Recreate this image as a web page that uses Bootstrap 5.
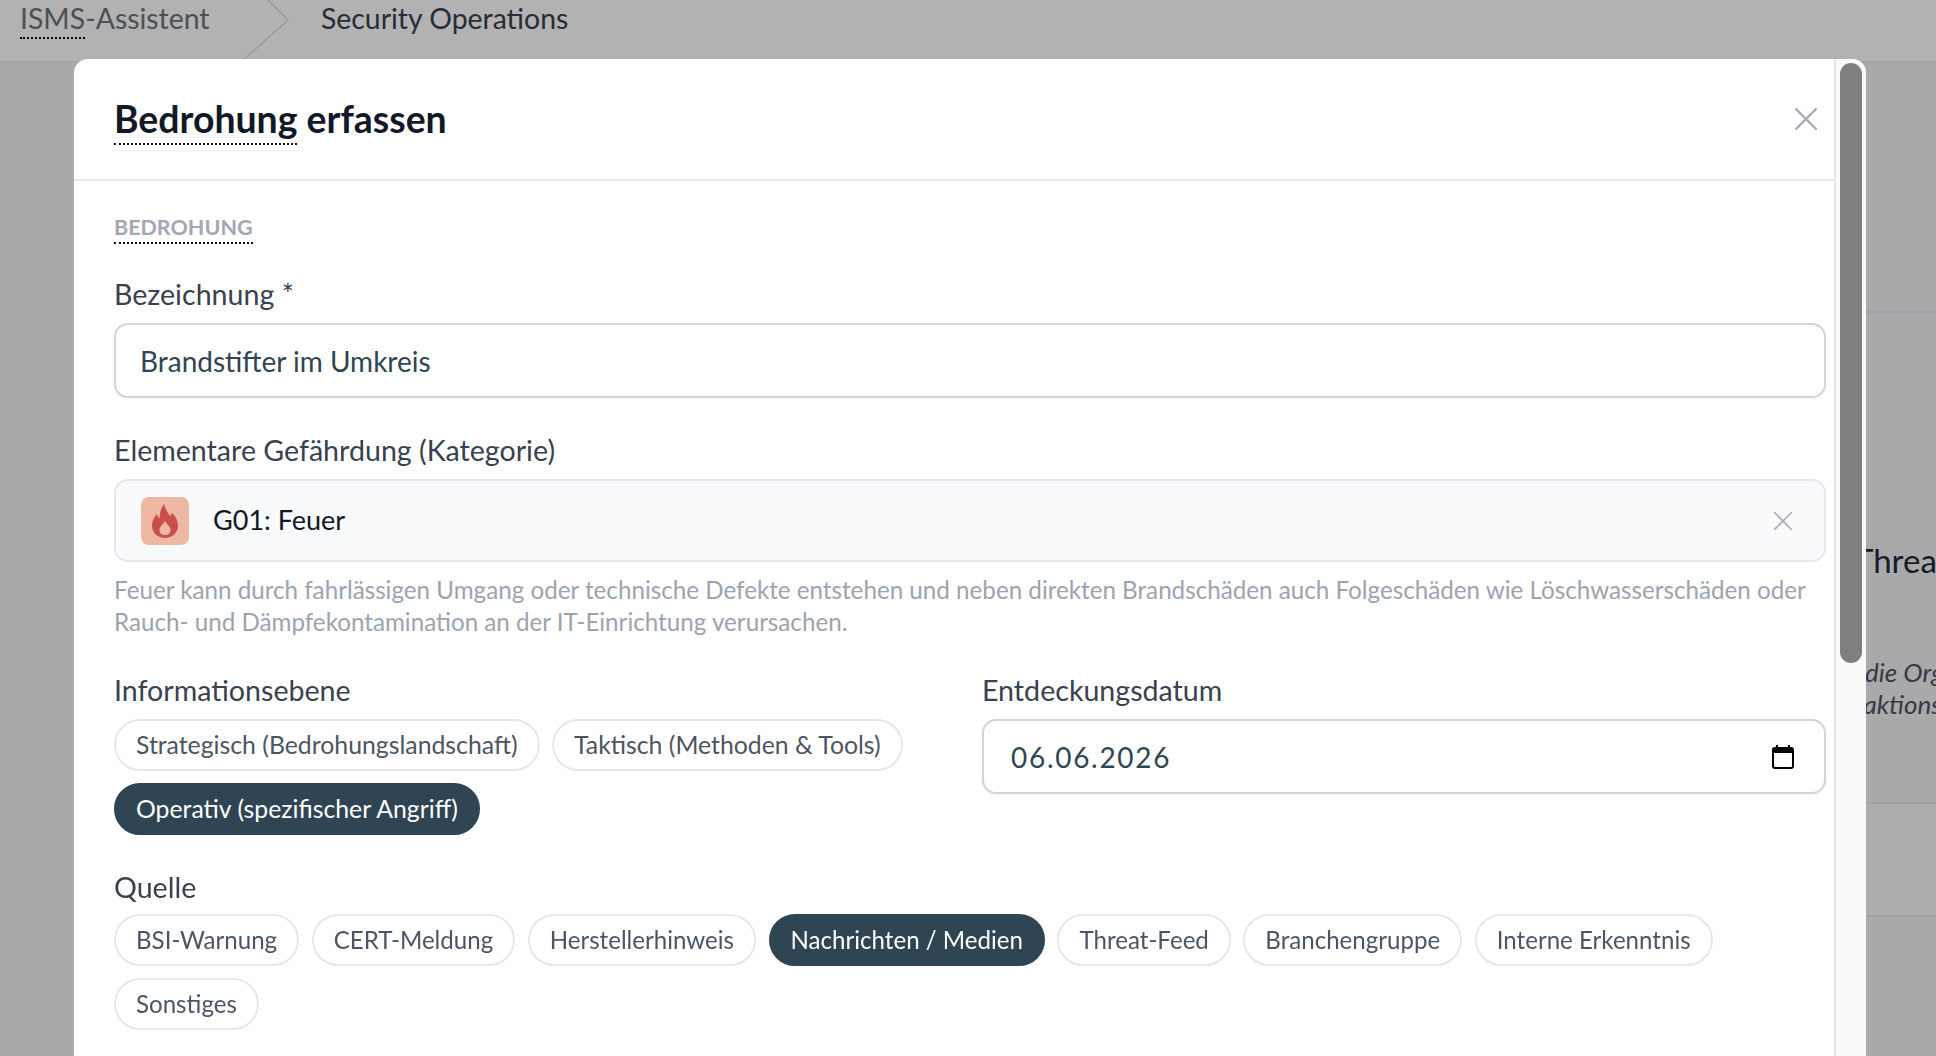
<!DOCTYPE html>
<html lang="de">
  <head>
    <meta charset="UTF-8" />
    <meta name="viewport" content="width=device-width, initial-scale=1.0" />
    <title>Bedrohung erfassen | ISMS-Assistent</title>
    <link
      href="https://cdn.jsdelivr.net/npm/bootstrap@5.3.3/dist/css/bootstrap.min.css"
      rel="stylesheet"
    />
    <style>
      html,
      body {
        height: 100%;
        overflow: hidden;
      }

      body {
        font-family: "Lato", "Liberation Sans", sans-serif;
        background: #f2f2f5;
        color: #374151;
      }

      /* page behind the dialog */
      .top-strip {
        height: 63px;
        background: #fff;
        border-bottom: 2px solid #e5e7eb;
        font-size: 28.4px;
      }

      .crumb-root {
        padding-left: 20px;
        width: 321px;
        color: #6b7280;
        line-height: 36px;
      }

      .crumb-current {
        color: #374151;
        line-height: 36px;
      }

      .crumb-arrow {
        position: absolute;
        left: 240px;
        top: 0;
      }

      .back-rows {
        padding-left: 1500px;
      }

      .back-row {
        border-bottom: 2px solid #e5e7eb;
        white-space: nowrap;
        overflow: hidden;
      }

      .back-row-a {
        height: 250px;
      }

      .back-row-b {
        height: 491px;
        background: #f2f2f5;
        padding: 225px 0 0 354px;
      }

      .back-row-c {
        height: 113px;
        background: #f8f8f8;
      }

      .back-row-d {
        height: 140px;
        background: #f2f2f5;
        border: 0;
      }

      .back-heading {
        font-size: 33px;
        line-height: 44px;
        color: #1f2937;
      }

      .back-quote {
        font-size: 26px;
        line-height: 32px;
        font-style: italic;
        color: #4b5563;
        margin: 74px 0 0 11px;
      }

      .quote-tail {
        margin-left: -14px;
      }

      /* dialog */
      .scrim {
        position: fixed;
        inset: 0;
        background: rgba(0, 0, 0, 0.3);
      }

      .sheet {
        position: fixed;
        top: 59px;
        left: 74px;
        width: 1792px;
        bottom: 0;
        border: 0;
        border-radius: 14px 14px 0 0;
        overflow: hidden;
        background: #fff;
      }

      .sheet-pane {
        width: 1760px;
      }

      .sheet-rail {
        width: 32px;
        padding: 4px 4px 0;
        background: #fafafa;
        border-left: 2px solid #e5e5e5;
      }

      .rail-thumb {
        height: 600px;
        background: #7f7f7f;
        border-radius: 11px;
      }

      .sheet-head {
        height: 122px;
        padding: 0 16px 0 40px;
        border-bottom: 2px solid #e5e7eb;
      }

      .sheet-title {
        font-size: 37.4px;
        font-weight: 700;
        color: #111827;
        margin: 0;
      }

      .spell-mark {
        border-bottom: 2px dotted #111;
        padding-bottom: 2px;
      }

      .sheet-body {
        padding: 32px 8px 0 40px;
      }

      .sect-label {
        font-size: 21.5px;
        font-weight: 700;
        line-height: 28px;
        color: #a3a6b3;
        margin-bottom: 32px;
      }

      .sect-label span {
        display: inline-block;
        line-height: 26px;
      }

      .fld-label {
        font-size: 28.6px;
        line-height: 36px;
        margin-bottom: 11px;
        color: #374151;
        display: block;
      }

      .fld-gap {
        margin-top: 34px;
      }

      .fld-input {
        height: 75px;
        border: 2px solid #d1d5db;
        border-radius: 14px;
        padding: 0 24px;
        font-size: 28px;
        color: #2f4553;
        box-shadow: 0 1px 2px rgba(0, 0, 0, 0.05);
      }

      .date-value {
        letter-spacing: 1.7px;
        padding-left: 3px;
      }

      .cal-icon {
        margin-right: 6px;
      }

      .pick-box {
        height: 83px;
        border: 2px solid #e5e7eb;
        border-radius: 14px;
        background: #f9fafb;
        padding: 0 31px 0 25px;
        font-size: 27px;
        color: #111827;
      }

      .pick-icon {
        width: 48px;
        height: 48px;
        border-radius: 8px;
        background: #eeb8a5;
      }

      .help-text {
        font-size: 24.2px;
        line-height: 32px;
        color: #9ca3af;
        margin: 12px 0 0;
      }

      .info-row {
        --bs-gutter-x: 24px;
      }

      .pill-group {
        gap: 12px 12.5px;
        font-size: 24.1px;
      }

      .pill-group-level {
        font-size: 24.8px;
      }

      .choice-pill {
        height: 52px;
        padding: 0 20px;
        border: 2px solid #e5e7eb;
        border-radius: 26px;
        background: #fff;
        color: #4b5563;
        font-size: inherit;
        white-space: nowrap;
      }

      .choice-pill.is-on {
        background: #2f4553;
        border-color: #2f4553;
        color: #fff;
      }

      .source-label {
        margin-bottom: 9px;
      }

      .icon-btn {
        line-height: 0;
      }
    </style>
  </head>
  <body>
    <header class="top-strip d-flex position-relative">
      <div class="crumb-root"><span class="spell-mark">ISMS</span>-Assistent</div>
      <div class="crumb-current">Security Operations</div>
      <svg class="crumb-arrow" width="50" height="63" viewBox="0 0 50 63" fill="none">
        <path d="M28 0 48 20 0 63" stroke="#dedede" stroke-width="1.5" />
      </svg>
    </header>
    <main class="back-rows">
      <div class="back-row back-row-a"></div>
      <div class="back-row back-row-b">
        <div class="back-heading">Threat</div>
        <p class="back-quote">die Org<br /><span class="quote-tail">eaktions</span></p>
      </div>
      <div class="back-row back-row-c"></div>
      <div class="back-row back-row-d"></div>
    </main>

    <div class="scrim"></div>

    <div class="sheet modal-content flex-row" role="dialog">
      <div class="sheet-pane flex-shrink-0">
        <div class="sheet-head d-flex align-items-center justify-content-between">
          <h5 class="sheet-title"><span class="spell-mark">Bedrohung</span> erfassen</h5>
          <button class="btn p-0 border-0 icon-btn" type="button" aria-label="Schließen">
            <svg width="24" height="24" viewBox="0 0 24 24" fill="none" stroke="#a8aab6" stroke-width="2.4">
              <path d="M1.5 1.5 22.5 22.5M22.5 1.5 1.5 22.5" />
            </svg>
          </button>
        </div>
        <div class="sheet-body">
          <div class="sect-label"><span class="spell-mark">BEDROHUNG</span></div>

          <label class="fld-label" for="threatName">Bezeichnung *</label>
          <input class="form-control fld-input" id="threatName" type="text" value="Brandstifter im Umkreis" />

          <label class="fld-label fld-gap">Elementare Gefährdung (Kategorie)</label>
          <div class="pick-box d-flex align-items-center">
            <span class="pick-icon d-flex align-items-center justify-content-center me-4">
              <svg width="26" height="34" viewBox="0 0 26 34" fill="#c9504a" fill-rule="evenodd">
                <path d="M12 0C13 4 15 8 18 12C19 11 19.5 10.5 20 9C23.5 12 26 17 26 22C26 29 20 34 13 34C6 34 0 29 0 22C0 17 2 13 5 10C5.5 12 6.5 13.5 7.5 14.5C7.5 9 9 4 12 0ZM13 17C11.5 20 7.5 22.5 7.5 26C7.5 29 10 31 13 31C16 31 18.5 29 18.5 26C18.5 22.5 15 20.5 13 17Z" />
              </svg>
            </span>
            <span class="flex-grow-1">G01: Feuer</span>
            <button class="btn p-0 border-0 icon-btn" type="button" aria-label="Entfernen">
              <svg width="20" height="20" viewBox="0 0 20 20" fill="none" stroke="#a8aab6" stroke-width="1.6">
                <path d="M1 1 19 19M19 1 1 19" />
              </svg>
            </button>
          </div>
          <p class="help-text">
            Feuer kann durch fahrlässigen Umgang oder technische Defekte entstehen und neben direkten Brandschäden auch Folgeschäden wie Löschwasserschäden oder Rauch- und Dämpfekontamination an der IT-Einrichtung verursachen.
          </p>

          <div class="row info-row fld-gap">
            <div class="col-6">
              <label class="fld-label">Informationsebene</label>
              <div class="d-flex flex-wrap pill-group pill-group-level">
                <button class="choice-pill" type="button">Strategisch (Bedrohungslandschaft)</button>
                <button class="choice-pill" type="button">Taktisch (Methoden &amp; Tools)</button>
                <button class="choice-pill is-on" type="button">Operativ (spezifischer Angriff)</button>
              </div>
            </div>
            <div class="col-6">
              <label class="fld-label" for="foundOn">Entdeckungsdatum</label>
              <div class="fld-input d-flex align-items-center justify-content-between">
                <span class="date-value" id="foundOn">06.06.2026</span>
                <svg class="cal-icon" width="22" height="24" viewBox="0 0 22 24" fill="none">
                  <path d="M5 0V4M17 0V4" stroke="#000" stroke-width="2" />
                  <rect x="1" y="3" width="20" height="20" rx="2" stroke="#000" stroke-width="2" />
                  <rect x="1" y="3" width="20" height="5" fill="#000" />
                </svg>
              </div>
            </div>
          </div>

          <label class="fld-label fld-gap source-label">Quelle</label>
          <div class="d-flex flex-wrap pill-group">
            <button class="choice-pill" type="button">BSI-Warnung</button>
            <button class="choice-pill" type="button">CERT-Meldung</button>
            <button class="choice-pill" type="button">Herstellerhinweis</button>
            <button class="choice-pill is-on" type="button">Nachrichten / Medien</button>
            <button class="choice-pill" type="button">Threat-Feed</button>
            <button class="choice-pill" type="button">Branchengruppe</button>
            <button class="choice-pill" type="button">Interne Erkenntnis</button>
            <button class="choice-pill" type="button">Sonstiges</button>
          </div>
        </div>
      </div>
      <div class="sheet-rail flex-shrink-0">
        <div class="rail-thumb"></div>
      </div>
    </div>

    <script src="https://cdn.jsdelivr.net/npm/bootstrap@5.3.3/dist/js/bootstrap.bundle.min.js"></script>
  </body>
</html>
